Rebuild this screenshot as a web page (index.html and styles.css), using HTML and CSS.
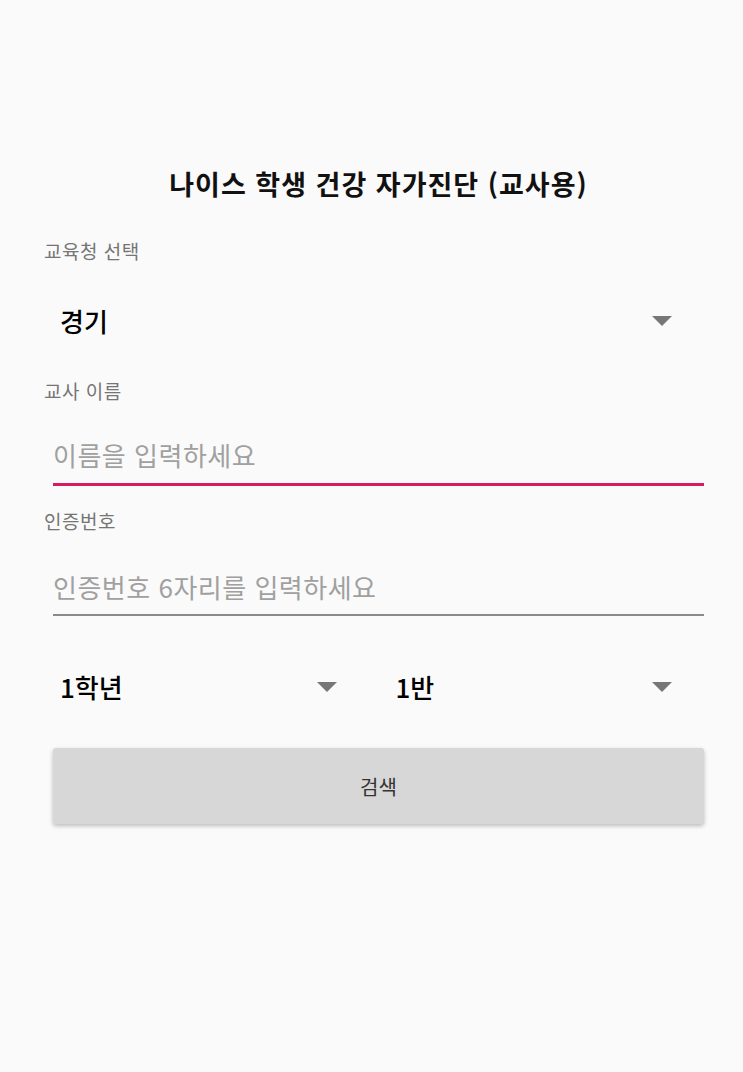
FILE: index.html
```html
<!DOCTYPE html>
<html lang="ko">
<head>
<meta charset="utf-8">
<title>나이스 학생 건강 자가진단 (교사용)</title>
<link rel="stylesheet" href="styles.css">
</head>
<body>
<main class="page">
  <h1 class="title">나이스 학생 건강 자가진단 (교사용)</h1>

  <div class="label label-first">교육청 선택</div>
  <div class="spinner spinner-full">
    <span class="spinner-value">경기</span>
    <span class="arrow"></span>
  </div>

  <div class="label label-second">교사 이름</div>
  <div class="field field-focused">
    <span class="placeholder">이름을 입력하세요</span>
  </div>

  <div class="label label-third">인증번호</div>
  <div class="field field-idle">
    <span class="placeholder">인증번호 6자리를 입력하세요</span>
  </div>

  <div class="spinner-row">
    <div class="spinner spinner-half">
      <span class="spinner-value">1학년</span>
      <span class="arrow"></span>
    </div>
    <div class="spinner spinner-half">
      <span class="spinner-value">1반</span>
      <span class="arrow"></span>
    </div>
  </div>

  <button class="search-btn" type="button">검색</button>
</main>
</body>
</html>
```

FILE: styles.css
```css
html, body {
  margin: 0;
  padding: 0;
  background: #fafafa;
}

body {
  font-family: "Noto Sans CJK KR", "Noto Sans", sans-serif;
  color: #000;
}

.page {
  width: 743px;
  min-height: 1072px;
  box-sizing: border-box;
  padding: 168px 39px 0 44px;
}

.title {
  margin: 0 -9px 0 0;
  height: 32px;
  line-height: 32px;
  font-size: 27px;
  font-weight: 700;
  text-align: center;
  color: #111;
  letter-spacing: 1px;
}

.label {
  height: 24px;
  line-height: 24px;
  font-size: 19px;
  color: #757575;
  letter-spacing: 0.5px;
}

.label-first { margin-top: 39px; }
.label-second { margin-top: 34px; }
.label-third { margin-top: 23px; }

.spinner {
  display: flex;
  align-items: center;
  justify-content: space-between;
  height: 48px;
  box-sizing: border-box;
  padding: 0 32px 0 7px;
}

.spinner-full {
  margin: 34px 0 0 9px;
}

.spinner-value {
  font-size: 26px;
  font-weight: 500;
  color: #000;
  line-height: 48px;
}

.arrow {
  width: 0;
  height: 0;
  border-left: 10px solid transparent;
  border-right: 10px solid transparent;
  border-top: 10px solid #777;
}

.field {
  margin-left: 9px;
  box-sizing: border-box;
}

.field .placeholder {
  display: block;
  height: 40px;
  line-height: 40px;
  font-size: 26px;
  color: #a0a0a0;
  letter-spacing: 0.5px;
}

.field-focused {
  margin-top: 32px;
  padding-bottom: 8px;
  border-bottom: 3px solid #d81b60;
}

.field-idle {
  margin-top: 34px;
  padding-bottom: 7px;
  border-bottom: 2px solid #8a8a8a;
}

.spinner-row {
  display: flex;
  gap: 20px;
  margin: 47px 0 0 9px;
}

.spinner-half {
  flex: 1 1 0;
}

.search-btn {
  display: block;
  width: calc(100% - 9px);
  margin: 37px 0 0 9px;
  height: 76px;
  border: none;
  border-radius: 3px;
  background: #d6d7d6;
  box-shadow: 0 2px 4px rgba(0, 0, 0, 0.25);
  font-family: "Noto Sans CJK KR", "Noto Sans", sans-serif;
  font-size: 20px;
  color: #333;
  padding: 0;
}
```
